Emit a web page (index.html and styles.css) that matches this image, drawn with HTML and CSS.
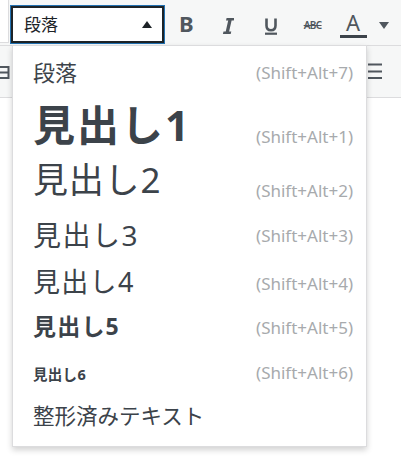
FILE: index.html
```html
<!DOCTYPE html>
<html lang="ja">
<head>
<meta charset="utf-8">
<link rel="stylesheet" href="styles.css">
</head>
<body>
<div class="editor">
  <div class="toolbar">
    <div class="tb-row tb-top">
      <div class="stub"></div>
      <div class="select">
        <span class="select-label">段落</span>
        <span class="select-arrow"></span>
      </div>
      <span class="btn btn-b">B</span>
      <span class="btn btn-i">
        <svg width="12" height="16" viewBox="0 0 12 16"><path d="M4.6 0H12.4L11.8 2.6H9.6L7.1 13.4H9.3L8.7 16H0.9L1.5 13.4H3.7L6.2 2.6H4Z" fill="#50575e"/></svg>
      </span>
      <span class="btn btn-u">
        <svg width="14" height="17" viewBox="0 0 14 17"><path d="M2.5 0.5V7.5C2.5 10.6 4.3 12.2 7 12.2C9.7 12.2 11.5 10.6 11.5 7.5V0.5" fill="none" stroke="#50575e" stroke-width="2.6"/><rect x="1" y="14.6" width="12" height="2.2" fill="#50575e"/></svg>
      </span>
      <span class="btn btn-s">ABC</span>
      <span class="btn btn-a">
        <span class="a-letter">A</span>
        <span class="a-bar"></span>
      </span>
      <span class="btn btn-dd"></span>
    </div>
    <div class="tb-row tb-second">
      <svg class="ic-left" width="11" height="14" viewBox="0 0 11 14"><path d="M0 1H10M0 6.5H10M0 12H10M9.5 0V13" stroke="#50575e" stroke-width="2" fill="none"/></svg>
      <svg class="ic-right" width="14" height="16" viewBox="0 0 14 16"><path d="M0 1.5H14M0 8.5H14M0 15H14" stroke="#50575e" stroke-width="2" fill="none"/></svg>
    </div>
  </div>
  <div class="content"></div>

  <ul class="menu">
    <li class="item it-p"><span class="label">段落</span><span class="sc">(Shift+Alt+7)</span></li>
    <li class="item it-h1"><span class="label">見出し1</span><span class="sc">(Shift+Alt+1)</span></li>
    <li class="item it-h2"><span class="label">見出し2</span><span class="sc">(Shift+Alt+2)</span></li>
    <li class="item it-h3"><span class="label">見出し3</span><span class="sc">(Shift+Alt+3)</span></li>
    <li class="item it-h4"><span class="label">見出し4</span><span class="sc">(Shift+Alt+4)</span></li>
    <li class="item it-h5"><span class="label">見出し5</span><span class="sc">(Shift+Alt+5)</span></li>
    <li class="item it-h6"><span class="label">見出し6</span><span class="sc">(Shift+Alt+6)</span></li>
    <li class="item it-pre"><span class="label">整形済みテキスト</span></li>
  </ul>
</div>
</body>
</html>
```

FILE: styles.css
```css
* { box-sizing: border-box; }
html, body { margin: 0; padding: 0; background: #fff; }
body {
  font-family: "Noto Sans", "Noto Sans CJK JP", sans-serif;
  color: #3c434a;
  width: 401px;
  height: 464px;
  overflow: hidden;
}
.editor { position: relative; width: 401px; height: 464px; }

.toolbar { background: #f6f7f7; }
.tb-row { display: flex; }
.tb-top {
  height: 46px;
  border-bottom: 1px solid #dcdcde;
  align-items: flex-start;
}
.stub {
  width: 9px;
  height: 43px;
  background: #fff;
  border-right: 1px solid #dcdcde;
  border-bottom: 1px solid #dcdcde;
}
.select {
  margin: 6px 0 0 2px;
  width: 153px;
  height: 37px;
  border: 2px solid #1d2327;
  box-shadow: 0 0 0 1px #2271b1;
  background: #fff;
  display: flex;
  align-items: center;
  justify-content: space-between;
  padding: 0 10px 0 11px;
}
.select-label {
  font-size: 17px;
  line-height: 1;
  color: #1d2327;
}
.select-arrow {
  width: 0; height: 0;
  border-left: 5px solid transparent;
  border-right: 5px solid transparent;
  border-bottom: 7px solid #1d2327;
  margin-top: -1px;
}
.btn {
  display: flex;
  align-items: center;
  justify-content: center;
  height: 44px;
  color: #50575e;
}
.btn-b {
  margin-left: 15px;
  font-weight: 700;
  font-size: 22px;
  padding-top: 2px;
}
.btn-i { margin-left: 28px; padding-top: 7px; }
.btn-u { margin-left: 30px; padding-top: 9px; }
.btn-s {
  margin-left: 26px;
  font-size: 10px;
  font-weight: 600;
  letter-spacing: -0.6px;
  text-decoration: line-through;
  padding-top: 6px;
}
.btn-a {
  margin-left: 18px;
  flex-direction: column;
  width: 27px;
  justify-content: flex-start;
  padding-top: 14px;
}
.a-letter {
  font-size: 22px;
  line-height: 17px;
  font-weight: 400;
  color: #50575e;
}
.a-bar {
  display: block;
  width: 27px;
  height: 3px;
  background: #3c434a;
  margin-top: 4px;
}
.btn-dd {
  margin-left: 12px;
  width: 10px;
  height: 0;
  margin-top: 22px;
  border-left: 5px solid transparent;
  border-right: 5px solid transparent;
  border-top: 7px solid #50575e;
}

.tb-second {
  height: 52px;
  border-bottom: 1px solid #dcdcde;
  align-items: flex-start;
  justify-content: space-between;
}
.ic-left { margin-top: 20px; margin-left: -1px; }
.ic-right { margin-top: 17px; margin-right: 19px; }

.content { height: 366px; background: #fff; }

.menu {
  position: absolute;
  left: 12px;
  top: 45px;
  width: 355px;
  margin: 0;
  padding: 0 13px 12px 20px;
  list-style: none;
  background: #fff;
  border: 1px solid #dcdcde;
  box-shadow: 0 3px 6px rgba(0, 0, 0, 0.18);
}
.item {
  display: flex;
  align-items: center;
  justify-content: space-between;
  white-space: nowrap;
}
.label { display: block; line-height: 1; }
.sc {
  display: block;
  font-size: 17px;
  line-height: 20px;
  color: #a7aaad;
}
.it-p { height: 52px; }
.it-p .label { font-size: 22px; }
.it-p .sc { margin-top: 2px; }
.it-h1 { height: 53px; }
.it-h1 .label { font-size: 42px; font-weight: 700; letter-spacing: 2px; }
.it-h1 .sc { margin-top: 25px; }
.it-h2 { height: 57px; }
.it-h2 .label { font-size: 35px; letter-spacing: 0.8px; }
.it-h2 .sc { margin-top: 23px; }
.it-h3 { height: 53px; }
.it-h3 .label { font-size: 28px; letter-spacing: 1.5px; }
.it-h3 .sc { margin-top: 3px; }
.it-h4 { height: 41px; }
.it-h4 .label { font-size: 27px; letter-spacing: 1.3px; }
.it-h4 .sc { margin-top: 5px; }
.it-h5 { height: 49px; }
.it-h5 .label { font-size: 23px; font-weight: 700; letter-spacing: 1.2px; }
.it-h5 .sc { margin-top: 3px; }
.it-h6 { height: 46px; }
.it-h6 .label { font-size: 14.5px; font-weight: 700; letter-spacing: 0.3px; }
.it-h6 .sc { margin-bottom: 3px; }
.it-pre { height: 37px; }
.it-pre .label { font-size: 21.5px; }
```
